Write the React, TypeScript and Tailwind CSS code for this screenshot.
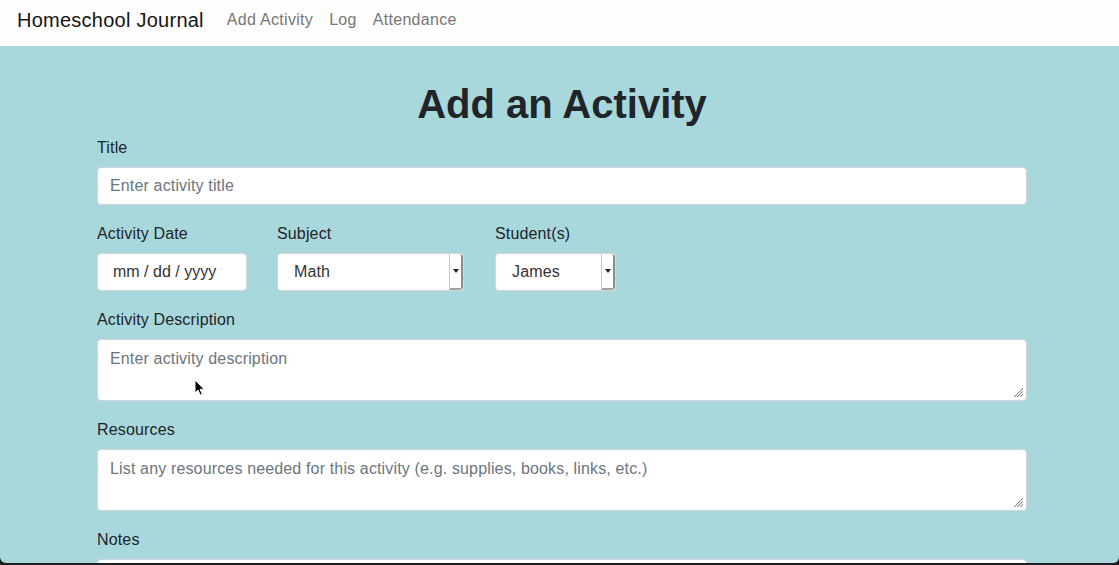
import React from "react";

const font = { fontFamily: '"Liberation Sans", Arial, sans-serif', letterSpacing: "0.15px" };

function Grip() {
  return (
    <svg className="absolute right-[2px] bottom-[2px]" width="12" height="12" viewBox="0 0 12 12">
      <path d="M11 2 L2 11 M11 5 L5 11 M11 8 L8 11" stroke="#888" strokeWidth="1" fill="none" />
      <path d="M11 3 L3 11 M11 6 L6 11 M11 9 L9 11" stroke="#ddd" strokeWidth="1" fill="none" />
    </svg>
  );
}

function Select({ value, width }: { value: string; width: string }) {
  return (
    <div className={`flex h-[38px] ${width} rounded-[4px] bg-white border border-[#d6d6d6] overflow-hidden`}>
      <div className="flex-1 flex items-center pl-[16px] text-[16px] text-[#333]">{value}</div>
      <div className="w-[14px] flex items-center justify-center bg-white border-l border-[#c8c8c8] border-r-2 border-r-[#8e8e8e] border-b-2 border-b-[#a0a0a0] rounded-r-[3px]">
        <svg width="6" height="4" viewBox="0 0 6 4">
          <path d="M0 0 H6 L3 4 Z" fill="#222" />
        </svg>
      </div>
    </div>
  );
}

export default function App() {
  return (
    <div className="h-[565px] w-full flex flex-col bg-[#1e1e1e] overflow-hidden" style={font}>
      <nav className="h-[46px] bg-[#fdfdfd] flex items-start pt-[8px] pl-[17px]">
        <span className="text-[20px] leading-[24px] text-[#151515] mr-[16px] tracking-[0.25px]">Homeschool Journal</span>
        <div className="flex text-[16px] leading-[24px] text-[#777777] tracking-[0.3px]">
          <span className="pl-[7px] pr-[8px]">Add Activity</span>
          <span className="px-[8px]">Log</span>
          <span className="px-[8px]">Attendance</span>
        </div>
      </nav>
      <main className="relative flex-1 mb-[2px] bg-[#a8d8dc] rounded-b-[6px] overflow-hidden">
        <div className="flex justify-center pl-[5px]">
          <div className="w-[930px] pt-[34px] text-[#212529]">
            <h1 className="text-[40px] leading-[48px] font-bold text-center mb-[8px] tracking-[0px]">Add an Activity</h1>

            <div className="mb-[17px]">
              <label className="block text-[16px] leading-[24px] mb-[7px]">Title</label>
              <div className="h-[38px] rounded-[4px] bg-white border border-[#ced4da] flex items-center pl-[12px] text-[16px] text-[#6c757d]">
                Enter activity title
              </div>
            </div>

            <div className="flex mb-[17px]">
              <div className="mr-[30px]">
                <label className="block text-[16px] leading-[24px] mb-[7px]">Activity Date</label>
                <div className="h-[38px] w-[150px] rounded-[4px] bg-white border border-[#ced4da] flex items-center pl-[15px] text-[16px] text-[#333] tracking-[0px]">
                  mm / dd / yyyy
                </div>
              </div>
              <div className="mr-[31px]">
                <label className="block text-[16px] leading-[24px] mb-[7px]">Subject</label>
                <Select value="Math" width="w-[187px]" />
              </div>
              <div>
                <label className="block text-[16px] leading-[24px] mb-[7px]">Student(s)</label>
                <Select value="James" width="w-[121px]" />
              </div>
            </div>

            <div className="mb-[17px]">
              <label className="block text-[16px] leading-[24px] mb-[7px]">Activity Description</label>
              <div className="relative h-[62px] rounded-[4px] bg-white border border-[#ced4da] pl-[12px] pt-[7px] text-[16px] leading-[24px] text-[#6c757d]">
                Enter activity description
                <Grip />
              </div>
            </div>

            <div className="mb-[17px]">
              <label className="block text-[16px] leading-[24px] mb-[7px]">Resources</label>
              <div className="relative h-[62px] rounded-[4px] bg-white border border-[#ced4da] pl-[12px] pt-[7px] text-[16px] leading-[24px] text-[#6c757d]">
                List any resources needed for this activity (e.g. supplies, books, links, etc.)
                <Grip />
              </div>
            </div>

            <div className="mb-[17px]">
              <label className="block text-[16px] leading-[24px] mb-[7px]">Notes</label>
              <div className="h-[62px] rounded-[4px] bg-white border border-[#ced4da]" />
            </div>
          </div>
        </div>
        <svg className="absolute left-[194px] top-[333px]" width="12" height="18" viewBox="0 0 12 18">
          <path d="M1 1 L1 14 L4 11 L6.3 16.2 L8.3 15.3 L6.1 10.3 L10.2 10.3 Z" fill="#000" stroke="#fff" strokeWidth="1" />
        </svg>
      </main>
    </div>
  );
}
